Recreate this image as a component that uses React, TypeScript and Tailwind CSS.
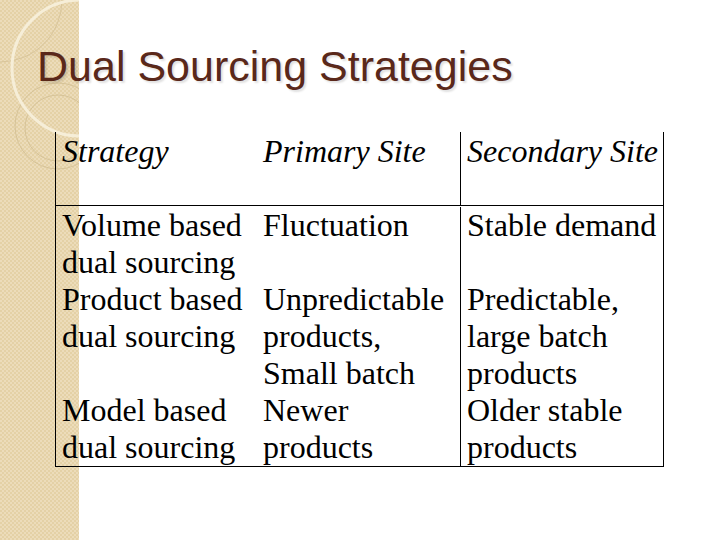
const rows = [
  {
    strategy: ["Volume based", "dual sourcing"],
    primary: ["Fluctuation"],
    secondary: ["Stable demand"],
  },
  {
    strategy: ["Product based", "dual sourcing"],
    primary: ["Unpredictable", "products,", "Small batch"],
    secondary: ["Predictable,", "large batch", "products"],
  },
  {
    strategy: ["Model based", "dual sourcing"],
    primary: ["Newer", "products"],
    secondary: ["Older stable", "products"],
  },
];

function Lines({ lines }: { lines: string[] }) {
  return (
    <>
      {lines.map((l) => (
        <div key={l} className="whitespace-nowrap">
          {l}
        </div>
      ))}
    </>
  );
}

function SideStrip() {
  return (
    <div className="absolute inset-y-0 left-0 w-[79px] overflow-hidden bg-[#e8d7b0] bg-[repeating-conic-gradient(#e4d1a6_0%_25%,#ecdcba_0%_50%)] bg-[length:4px_4px]">
      <svg width="79" height="540" viewBox="0 0 79 540" fill="none">
        <circle cx="0" cy="0" r="62" stroke="#d8c59b" strokeWidth="1" />
        <circle cx="58" cy="126" r="43" stroke="#d6c398" strokeWidth="1" />
        <circle cx="58" cy="128" r="33" stroke="#d6c398" strokeWidth="1" />
        <circle cx="80" cy="68" r="68" stroke="#f6eed8" strokeWidth="3" />
      </svg>
    </div>
  );
}

export default function App() {
  return (
    <div className="relative w-[720px] h-[540px] overflow-hidden bg-white">
      <SideStrip />

      <div className="relative">
        <h1 className="pt-[42px] pl-[37px] text-[43px] leading-[48px] text-[#5a281a] font-['Liberation_Sans',Arial,sans-serif] [text-shadow:2px_2px_2px_rgba(0,0,0,0.12)]">
          Dual Sourcing Strategies
        </h1>

        <div className="mt-[42px] ml-[55px] w-[609px] border-x border-b border-black text-black text-[32px] leading-[37px] font-['Liberation_Serif','Times_New_Roman',serif]">
          <div className="grid grid-cols-[200px_204px_1fr] h-[74px] border-b border-black italic">
            <div className="pl-[6px] pt-px">Strategy</div>
            <div className="pl-[7px] pt-px">Primary Site</div>
            <div className="pl-[6px] pt-px border-l border-black">Secondary Site</div>
          </div>
          <div className="pt-px">
            {rows.map((r) => (
              <div key={r.strategy[0]} className="grid grid-cols-[200px_204px_1fr]">
                <div className="pl-[6px]">
                  <Lines lines={r.strategy} />
                </div>
                <div className="pl-[7px]">
                  <Lines lines={r.primary} />
                </div>
                <div className="pl-[6px] border-l border-black">
                  <Lines lines={r.secondary} />
                </div>
              </div>
            ))}
          </div>
        </div>
      </div>
    </div>
  );
}
